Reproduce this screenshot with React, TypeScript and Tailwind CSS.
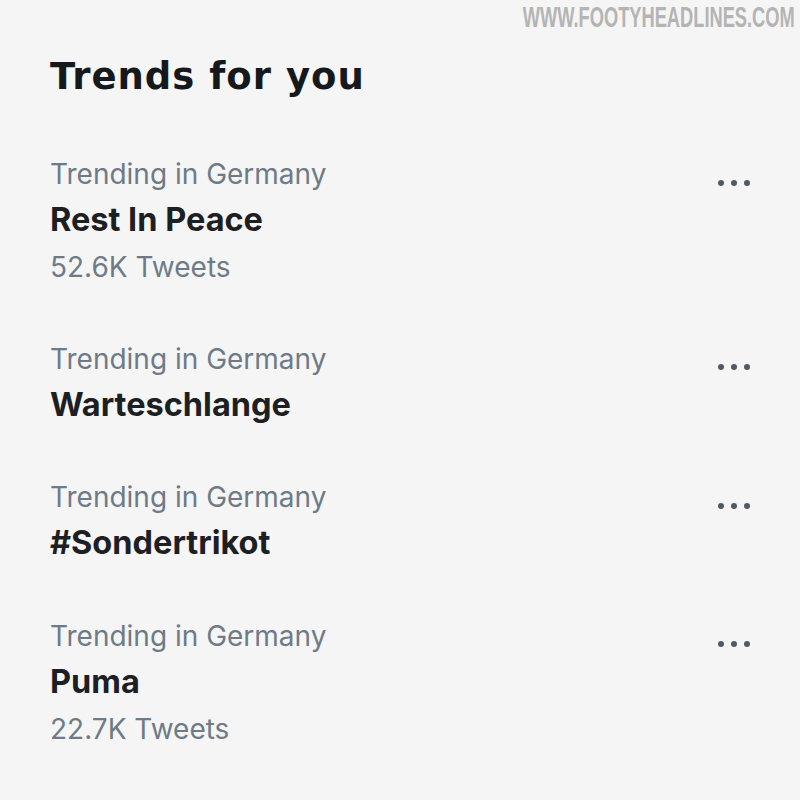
import React from "react";

const trends = [
  { title: "Rest In Peace", count: "52.6K Tweets" },
  { title: "Warteschlange" },
  { title: "#Sondertrikot" },
  { title: "Puma", count: "22.7K Tweets" },
];

function Dots() {
  return (
    <div className="mt-[8px] flex h-[45px] items-center gap-[7px]">
      <span className="block h-[6px] w-[6px] rounded-full bg-[#4f5a64]" />
      <span className="block h-[6px] w-[6px] rounded-full bg-[#4f5a64]" />
      <span className="block h-[6px] w-[6px] rounded-full bg-[#4f5a64]" />
    </div>
  );
}

export default function App() {
  return (
    <div
      className="relative h-[800px] w-[800px] overflow-hidden bg-[#f5f5f5]"
      style={{ fontFamily: 'Inter, "Noto Sans", sans-serif' }}
    >
      <div className="absolute right-[5px] top-[1px] origin-right scale-x-[0.63] whitespace-nowrap text-[29px] font-bold leading-[32px] text-[#b4b4b4] [font-family:'Liberation_Sans',sans-serif]">
        WWW.FOOTYHEADLINES.COM
      </div>
      <div className="flex flex-col pl-[50px] pr-[50px] pt-[55px]">
        <h2 className="mb-[53px] text-[37px] font-bold leading-[44px] tracking-[1px] text-[#16191c] [font-family:'DejaVu_Sans',sans-serif]">
          Trends for you
        </h2>
        <div className="flex flex-col gap-[48.5px]">
          {trends.map((t) => (
            <div key={t.title} className="flex items-start justify-between">
              <div className="flex flex-col">
                <div className="text-[28px] leading-[45px] text-[#6e7b87]">Trending in Germany</div>
                <div className="text-[32.5px] font-bold leading-[45px] text-[#1d2023]">{t.title}</div>
                {t.count && (
                  <div className="mt-[5px] text-[28px] leading-[41px] text-[#6e7b87]">{t.count}</div>
                )}
              </div>
              <Dots />
            </div>
          ))}
        </div>
      </div>
    </div>
  );
}
